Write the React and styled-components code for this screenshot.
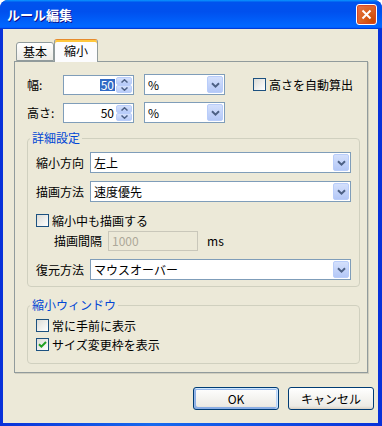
import React from 'react';
import styled, { createGlobalStyle } from 'styled-components';

const GlobalStyle = createGlobalStyle`
  html, body { margin: 0; padding: 0; background: #fff; }
  body {
    font-family: "Noto Sans CJK JP", "Noto Sans", sans-serif;
    font-size: 12px;
    color: #000;
  }
`;

const Window = styled.div`
  width: 382px;
  height: 426px;
  box-sizing: border-box;
  display: flex;
  flex-direction: column;
  background: linear-gradient(90deg, #0831d9, #166aee 40%, #0831d9);
  border-radius: 8px 8px 0 0;
  overflow: hidden;
`;

const TitleBar = styled.div`
  height: 29px;
  flex: none;
  display: flex;
  align-items: center;
  justify-content: space-between;
  padding: 0 5px 0 7px;
  background: linear-gradient(180deg, #0997ff, #0053ee 8%, #0050ee 40%, #0066ff 88%, #0066ff 93%, #005bff 95%, #003dd7 96%, #003dd7);
  color: #fff;
  font-weight: bold;
  font-size: 13px;
  text-shadow: 1px 1px #0f1089;
`;

const CloseButton = styled.div`
  width: 21px;
  height: 21px;
  box-sizing: border-box;
  border: 1px solid #fff;
  border-radius: 3px;
  background: radial-gradient(circle at 85% 85%, #cc4600, #dc6527 55%, #e97450);
  box-shadow: inset 0 0 1px 1px #da4626;
  display: flex;
  align-items: center;
  justify-content: center;
`;

const Body = styled.div`
  flex: 1;
  margin: 0 4px 3px 3px;
  background: #ece9d8;
  padding: 10px 4px 0 11px;
  display: flex;
  flex-direction: column;
`;

const TabStrip = styled.div`
  height: 22px;
  display: flex;
  align-items: flex-end;
  padding-left: 2px;
  margin-right: 6px;
`;

const Tab = styled.div`
  box-sizing: border-box;
  height: ${p => (p.$active ? '23px' : '19px')};
  margin-bottom: ${p => (p.$active ? '-1px' : '0')};
  padding: 0 ${p => (p.$active ? '9px' : '6px')};
  border: 1px solid #919b9c;
  border-bottom: ${p => (p.$active ? 'none' : '1px solid #919b9c')};
  border-top-color: ${p => (p.$active ? '#e68b2c' : '#919b9c')};
  border-radius: 3px 3px 0 0;
  background: ${p => (p.$active ? '#fcfcfe' : 'linear-gradient(180deg, #fff, #ecebe6)')};
  box-shadow: ${p => (p.$active ? 'inset 0 2px #ffc73c' : 'none')};
  display: flex;
  align-items: center;
  position: relative;
  z-index: ${p => (p.$active ? 1 : 0)};
  line-height: 14px;
`;

const Panel = styled.div`
  box-sizing: border-box;
  height: 312px;
  margin-right: 6px;
  border: 1px solid #919b9c;
  box-shadow: 1px 1px 0 #d0cebf;
  background: #ece9d8;
  padding: 12px 7px 0 12px;
  display: flex;
  flex-direction: column;
`;

const TopRow = styled.div`
  height: 21px;
  display: flex;
  align-items: center;
  margin-top: ${p => p.$gap || 0}px;
`;

const TopLabel = styled.span`
  width: 36px;
  flex: none;
`;

const SpinBox = styled.div`
  box-sizing: border-box;
  width: 71px;
  height: 20px;
  border: 1px solid #7f9db9;
  background: #fff;
  display: flex;
  align-items: center;
  justify-content: flex-end;
  padding: 1px;
`;

const SpinValue = styled.span`
  padding: 0 1px;
  height: 12px;
  line-height: 12px;
  margin-right: 1px;
  background: ${p => (p.$selected ? '#316ac5' : 'transparent')};
  color: ${p => (p.$selected ? '#fff' : '#000')};
`;

const SpinButtons = styled.div`
  width: 16px;
  height: 100%;
  display: flex;
  flex-direction: column;
  gap: 0;
`;

const SpinArrow = styled.div`
  flex: 1;
  box-sizing: border-box;
  border: 1px solid #b9cdfa;
  border-radius: 2px;
  background: linear-gradient(180deg, #d4e0fc, #b8cbf8);
  display: flex;
  align-items: center;
  justify-content: center;
`;

const Select = styled.div`
  box-sizing: border-box;
  width: ${p => p.$width}px;
  height: 21px;
  flex: none;
  border: 1px solid #7f9db9;
  background: #fff;
  display: flex;
  align-items: center;
  padding: 1px 1px 1px 3px;
  margin-left: ${p => p.$ml || 0}px;
`;

const SelectText = styled.span`
  flex: 1;
  line-height: 14px;
`;

const DropButton = styled.div`
  box-sizing: border-box;
  width: 16px;
  height: 17px;
  border: 1px solid #b9cdfa;
  border-radius: 2px;
  background: linear-gradient(180deg, #d4e0fc, #b4c8f7);
  display: flex;
  align-items: center;
  justify-content: center;
`;

const CheckRow = styled.label`
  display: flex;
  align-items: center;
  gap: 3px;
  height: ${p => p.$h || 18}px;
  margin-left: ${p => p.$ml || 0}px;
  margin-top: ${p => p.$mt || 0}px;
  white-space: nowrap;
`;

const CheckBox = styled.span`
  box-sizing: border-box;
  width: 13px;
  height: 13px;
  flex: none;
  border: 1px solid #1c5180;
  background: linear-gradient(135deg, #dcdcd7, #fff);
  display: flex;
  align-items: center;
  justify-content: center;
`;

const Group = styled.fieldset`
  margin: ${p => p.$mt}px 0 0 0;
  border: 1px solid #d0d0bf;
  border-radius: 4px;
  padding: ${p => p.$pt}px 8px ${p => p.$pb}px 8px;
  min-width: 0;
`;

const Legend = styled.legend`
  color: #0046d5;
  line-height: 14px;
  padding: 0 2px;
  margin-left: -6px;
`;

const FieldRow = styled.div`
  display: flex;
  align-items: center;
  height: 21px;
  margin-top: ${p => p.$mt || 0}px;
`;

const FieldLabel = styled.span`
  width: 54px;
  flex: none;
`;

const IntervalRow = styled.div`
  display: flex;
  align-items: center;
  height: 21px;
  padding-left: 18px;
  margin-top: 1px;
`;

const DisabledInput = styled.div`
  box-sizing: border-box;
  width: 90px;
  height: 20px;
  margin-left: 6px;
  border: 1px solid #c9c7ba;
  background: #ece9d8;
  color: #aca899;
  padding-left: 3px;
  display: flex;
  align-items: center;
`;

const Unit = styled.span`
  margin-left: 9px;
`;

const ButtonRow = styled.div`
  display: flex;
  justify-content: flex-end;
  gap: 9px;
  margin-top: 14px;
`;

const Button = styled.div`
  box-sizing: border-box;
  width: 86px;
  height: 23px;
  border: 1px solid #003c74;
  border-radius: 3px;
  background: linear-gradient(180deg, #fff, #ecebe5 86%, #d8d0c4);
  box-shadow: ${p => (p.$default
    ? 'inset -1px 1px #cee7ff, inset 1px 2px #98b8ea, inset -2px 0 #bcd4f6, inset 1px -1px #89ade4, inset 2px -2px #89ade4'
    : 'none')};
  display: flex;
  align-items: center;
  justify-content: center;
`;

const ArrowDown = () => (
  <svg width="9" height="6" viewBox="0 0 9 6">
    <path d="M1 1.2 L4.5 4.6 L8 1.2" fill="none" stroke="#4d6185" strokeWidth="2" />
  </svg>
);

const SmallArrow = ({ up }) => (
  <svg width="7" height="4" viewBox="0 0 7 4">
    <path d={up ? 'M0.5 3.5 L3.5 0.8 L6.5 3.5' : 'M0.5 0.5 L3.5 3.2 L6.5 0.5'} fill="none" stroke="#4d6185" strokeWidth="1.5" />
  </svg>
);

const Check = () => (
  <svg width="9" height="9" viewBox="0 0 9 9">
    <path d="M1 4.2 L3.4 6.6 L8 2" fill="none" stroke="#21a121" strokeWidth="2" />
  </svg>
);

const Combo = ({ value, width, ml }) => (
  <Select $width={width} $ml={ml}>
    <SelectText>{value}</SelectText>
    <DropButton><ArrowDown /></DropButton>
  </Select>
);

const Spin = ({ value, selected }) => (
  <SpinBox>
    <SpinValue $selected={selected}>{value}</SpinValue>
    <SpinButtons>
      <SpinArrow><SmallArrow up /></SpinArrow>
      <SpinArrow><SmallArrow /></SpinArrow>
    </SpinButtons>
  </SpinBox>
);

const Checkbox = ({ checked, children, ...rest }) => (
  <CheckRow {...rest}>
    <CheckBox>{checked && <Check />}</CheckBox>
    {children}
  </CheckRow>
);

export default function App() {
  return (
    <>
      <GlobalStyle />
      <Window>
        <TitleBar>
          <span>ルール編集</span>
          <CloseButton>
            <svg width="11" height="11" viewBox="0 0 11 11">
              <path d="M1.5 1.5 L9.5 9.5 M9.5 1.5 L1.5 9.5" stroke="#fff" strokeWidth="2" />
            </svg>
          </CloseButton>
        </TitleBar>
        <Body>
          <TabStrip>
            <Tab>基本</Tab>
            <Tab $active>縮小</Tab>
          </TabStrip>
          <Panel>
            <TopRow>
              <TopLabel>幅:</TopLabel>
              <Spin value="50" selected />
              <Combo value="%" width={81} ml={10} />
              <Checkbox $ml={28}>高さを自動算出</Checkbox>
            </TopRow>
            <TopRow $gap={7}>
              <TopLabel>高さ:</TopLabel>
              <Spin value="50" />
              <Combo value="%" width={81} ml={10} />
            </TopRow>

            <Group $mt={8} $pt={7} $pb={6}>
              <Legend>詳細設定</Legend>
              <FieldRow>
                <FieldLabel>縮小方向</FieldLabel>
                <Combo value="左上" width={261} />
              </FieldRow>
              <FieldRow $mt={8}>
                <FieldLabel>描画方法</FieldLabel>
                <Combo value="速度優先" width={261} />
              </FieldRow>
              <Checkbox $mt={9}>縮小中も描画する</Checkbox>
              <IntervalRow>
                <span>描画間隔</span>
                <DisabledInput>1000</DisabledInput>
                <Unit>ms</Unit>
              </IntervalRow>
              <FieldRow $mt={8}>
                <FieldLabel>復元方法</FieldLabel>
                <Combo value="マウスオーバー" width={261} />
              </FieldRow>
            </Group>

            <Group $mt={11} $pt={4} $pb={9}>
              <Legend>縮小ウィンドウ</Legend>
              <Checkbox $h={19}>常に手前に表示</Checkbox>
              <Checkbox $h={19} checked>サイズ変更枠を表示</Checkbox>
            </Group>
          </Panel>
          <ButtonRow>
            <Button $default>OK</Button>
            <Button>キャンセル</Button>
          </ButtonRow>
        </Body>
      </Window>
    </>
  );
}
